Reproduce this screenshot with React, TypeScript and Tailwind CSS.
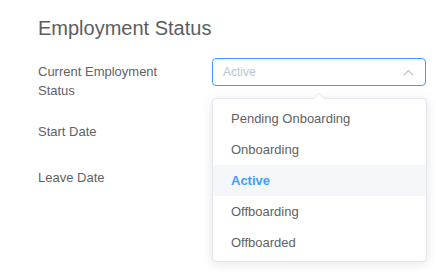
import { useState } from 'react';

const OPTIONS = ['Pending Onboarding', 'Onboarding', 'Active', 'Offboarding', 'Offboarded'];

function ChevronUp() {
  return (
    <svg width="11" height="7" viewBox="0 0 11 7" fill="none" aria-hidden="true">
      <path d="M1 6L5.5 1.5L10 6" stroke="#c0c4cc" strokeWidth="1.1" strokeLinecap="round" strokeLinejoin="round" />
    </svg>
  );
}

function StatusSelect({ value }: { value: string }) {
  return (
    <div className="relative w-[214px]">
      <div className="h-[28px] rounded-[4px] border border-[#409eff] bg-white pl-[10px] pr-[11px] flex items-center justify-between">
        <span className="text-[12px] text-[#c0c4cc]">{value}</span>
        <ChevronUp />
      </div>

      {/* dropdown panel */}
      <div className="absolute left-0 top-[40px] w-[215px] rounded-[4px] border border-[#e4e7ed] bg-white pt-[4px] pb-[3px] shadow-[0_2px_12px_rgba(0,0,0,0.1)] z-10">
        <div className="absolute -top-[6px] left-[100px] w-0 h-0 border-x-[6px] border-x-transparent border-b-[6px] border-b-[#e4e7ed]" />
        <div className="absolute -top-[5px] left-[100px] w-0 h-0 border-x-[6px] border-x-transparent border-b-[6px] border-b-white" />
        <ul>
          {OPTIONS.map((opt) => {
            const active = opt === value;
            return (
              <li
                key={opt}
                className={
                  active
                    ? 'h-[31px] leading-[31px] px-[18px] text-[13px] font-bold text-[#409eff] bg-[#f5f7fa]'
                    : 'h-[31px] leading-[31px] px-[18px] text-[13px] text-[#606266]'
                }
              >
                {opt}
              </li>
            );
          })}
        </ul>
      </div>
    </div>
  );
}

export default function App() {
  const [status] = useState('Active');

  return (
    <div className="w-[436px] h-[276px] bg-white overflow-hidden pl-[38px] pt-[16px]" style={{ fontFamily: '"Liberation Sans", Arial, sans-serif' }}>
      <h2 className="text-[20px] leading-[24px] text-[#5a5d62]">Employment Status</h2>

      <div className="mt-[18px] flex flex-col gap-[18px]">
        <div className="flex">
          <label className="w-[174px] pr-[24px] pt-[4px] text-[13px] leading-[19px] text-[#606266]">
            Current Employment Status
          </label>
          <StatusSelect value={status} />
        </div>
        <div className="flex">
          <label className="w-[174px] h-[28px] text-[13px] leading-[28px] text-[#606266]">Start Date</label>
        </div>
        <div className="flex">
          <label className="w-[174px] h-[28px] text-[13px] leading-[28px] text-[#606266]">Leave Date</label>
        </div>
      </div>
    </div>
  );
}
